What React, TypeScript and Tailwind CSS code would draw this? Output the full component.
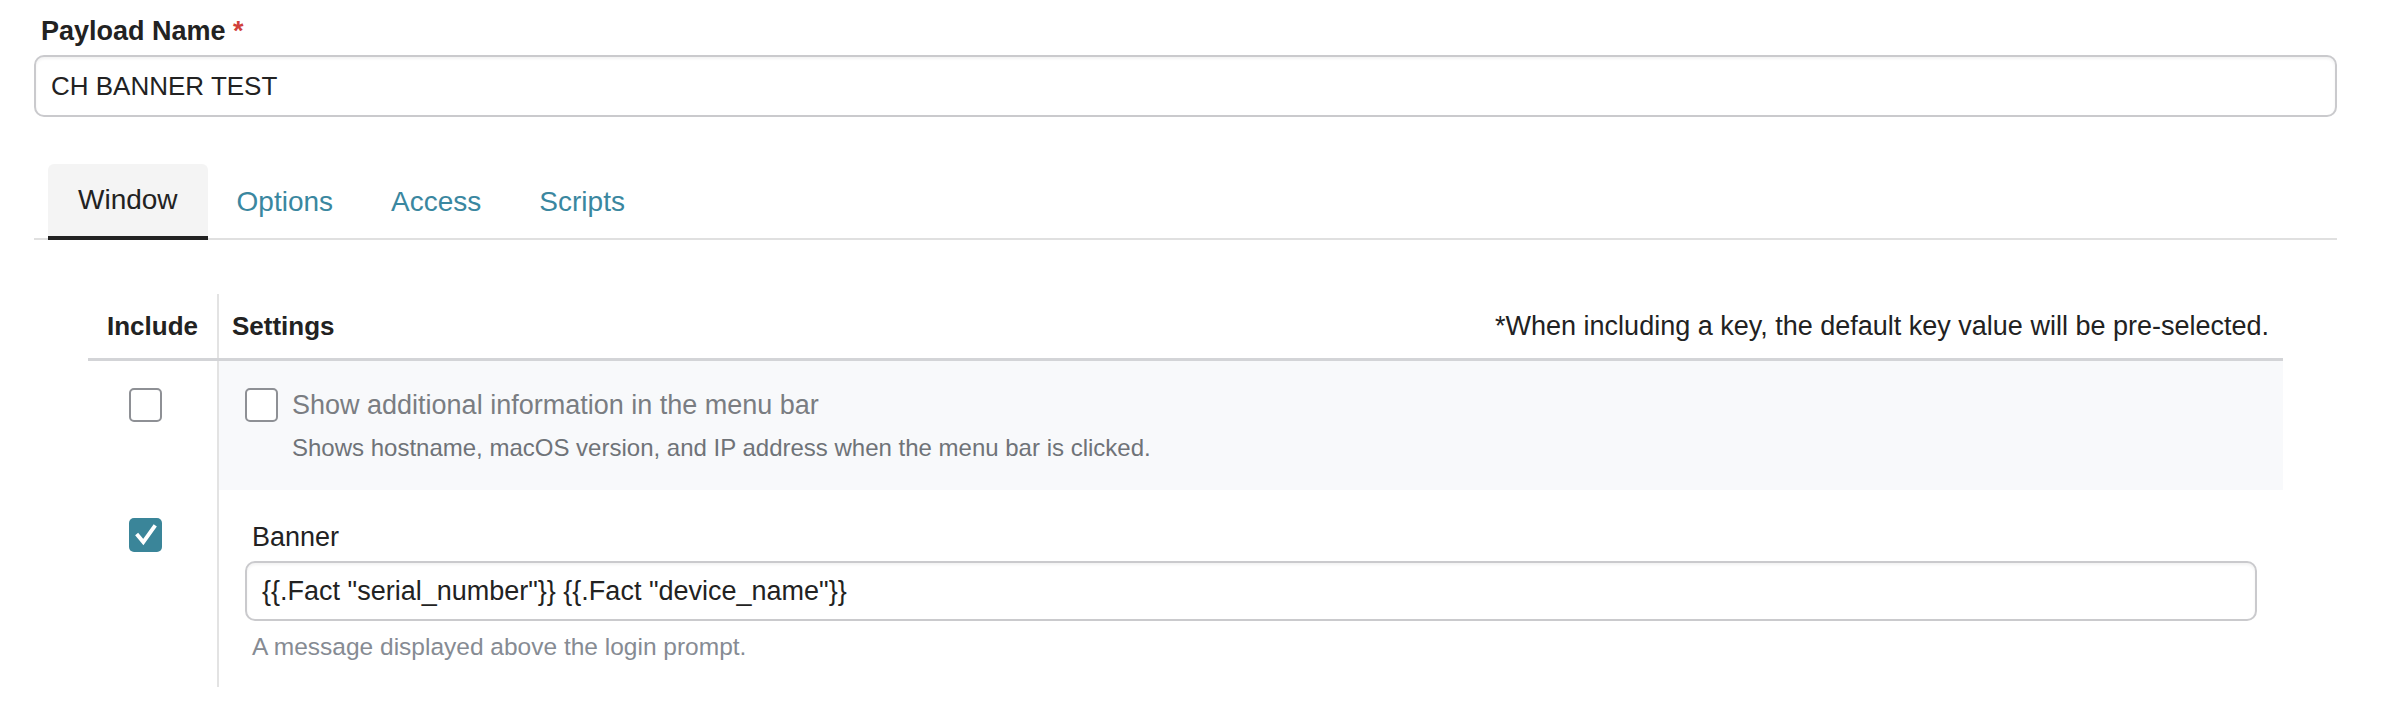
import React from 'react';

function Box({ checked = false }: { checked?: boolean }) {
  if (checked) {
    return (
      <span className="flex h-[34px] w-[33px] items-center justify-center rounded-[5px] bg-[#3a8599]">
        <svg viewBox="0 0 24 24" className="h-[26px] w-[26px]" fill="none">
          <path d="M4.5 12.5l5 6L19.5 4.5" stroke="#fff" strokeWidth="3.6" strokeLinecap="square" strokeLinejoin="miter" />
        </svg>
      </span>
    );
  }
  return <span className="block h-[34px] w-[33px] rounded-[5px] border-2 border-[#8e9095] bg-white" />;
}

const tabs = ['Window', 'Options', 'Access', 'Scripts'];

export default function App() {
  return (
    <div className="min-h-screen bg-white font-['Liberation_Sans',Arial,sans-serif] text-[#222]">
      <div className="ml-[34px] w-[2303px]">
        {/* Payload name */}
        <div className="pl-[7px] pt-[13px] text-[27px] font-bold leading-[36px]">
          Payload Name <span className="text-[#d0403a]">*</span>
        </div>
        <div className="mt-[6px] flex h-[62px] items-center rounded-[10px] border-2 border-[#cacacd] px-[15px] text-[26px] shadow-[inset_0_2px_3px_rgba(0,0,0,0.05)]">
          CH BANNER TEST
        </div>

        {/* Tabs */}
        <div className="mt-[47px] flex border-b-2 border-[#e0e0e0] pl-[14px]">
          {tabs.map((t, i) => (
            <div
              key={t}
              className={
                i === 0
                  ? '-mb-[2px] flex h-[76px] items-center rounded-t-[6px] border-b-4 border-[#222] bg-[#f4f4f4] px-[30px] text-[28px] text-[#222]'
                  : '-mb-[2px] flex h-[76px] items-center px-[29px] text-[28px] text-[#3a87a0]'
              }
            >
              {t}
            </div>
          ))}
        </div>

        {/* Table */}
        <div className="mx-[54px] mt-[54px]">
          <div className="flex h-[67px] border-b-[3px] border-[#d3d4d7]">
            <div className="flex w-[129px] items-center justify-center text-[26px] font-bold">Include</div>
            <div className="flex flex-1 items-center justify-between border-l-2 border-[#e3e3e3] pl-[13px] pr-[14px]">
              <span className="text-[26px] font-bold">Settings</span>
              <span className="text-[27px]">*When including a key, the default key value will be pre-selected.</span>
            </div>
          </div>

          <div className="flex">
            <div className="w-[129px] pl-[41px] pt-[27px]">
              <Box />
            </div>
            <div className="flex-1 border-l-2 border-[#e3e3e3] bg-[#f8f9fb] pb-[27px] pl-[26px] pt-[27px]">
              <div className="flex items-center gap-[14px]">
                <Box />
                <span className="text-[27px] leading-[34px] text-[#7a7d82]">Show additional information in the menu bar</span>
              </div>
              <div className="mt-[11px] pl-[47px] text-[24px] leading-[30px] text-[#6f7378]">
                Shows hostname, macOS version, and IP address when the menu bar is clicked.
              </div>
            </div>
          </div>

          <div className="flex">
            <div className="w-[129px] pl-[41px] pt-[28px]">
              <Box checked />
            </div>
            <div className="flex-1 border-l-2 border-[#e3e3e3] px-[26px] pb-[24px] pt-[31px]">
              <div className="pl-[7px] text-[27px] leading-[32px]">Banner</div>
              <div className="mt-[8px] flex h-[60px] items-center rounded-[10px] border-2 border-[#cacacd] px-[15px] text-[27px] shadow-[inset_0_2px_3px_rgba(0,0,0,0.05)]">
                {'{{.Fact "serial_number"}} {{.Fact "device_name"}}'}
              </div>
              <div className="mt-[10px] pl-[7px] text-[24.5px] leading-[32px] text-[#868b93]">
                A message displayed above the login prompt.
              </div>
            </div>
          </div>
        </div>
      </div>
    </div>
  );
}
